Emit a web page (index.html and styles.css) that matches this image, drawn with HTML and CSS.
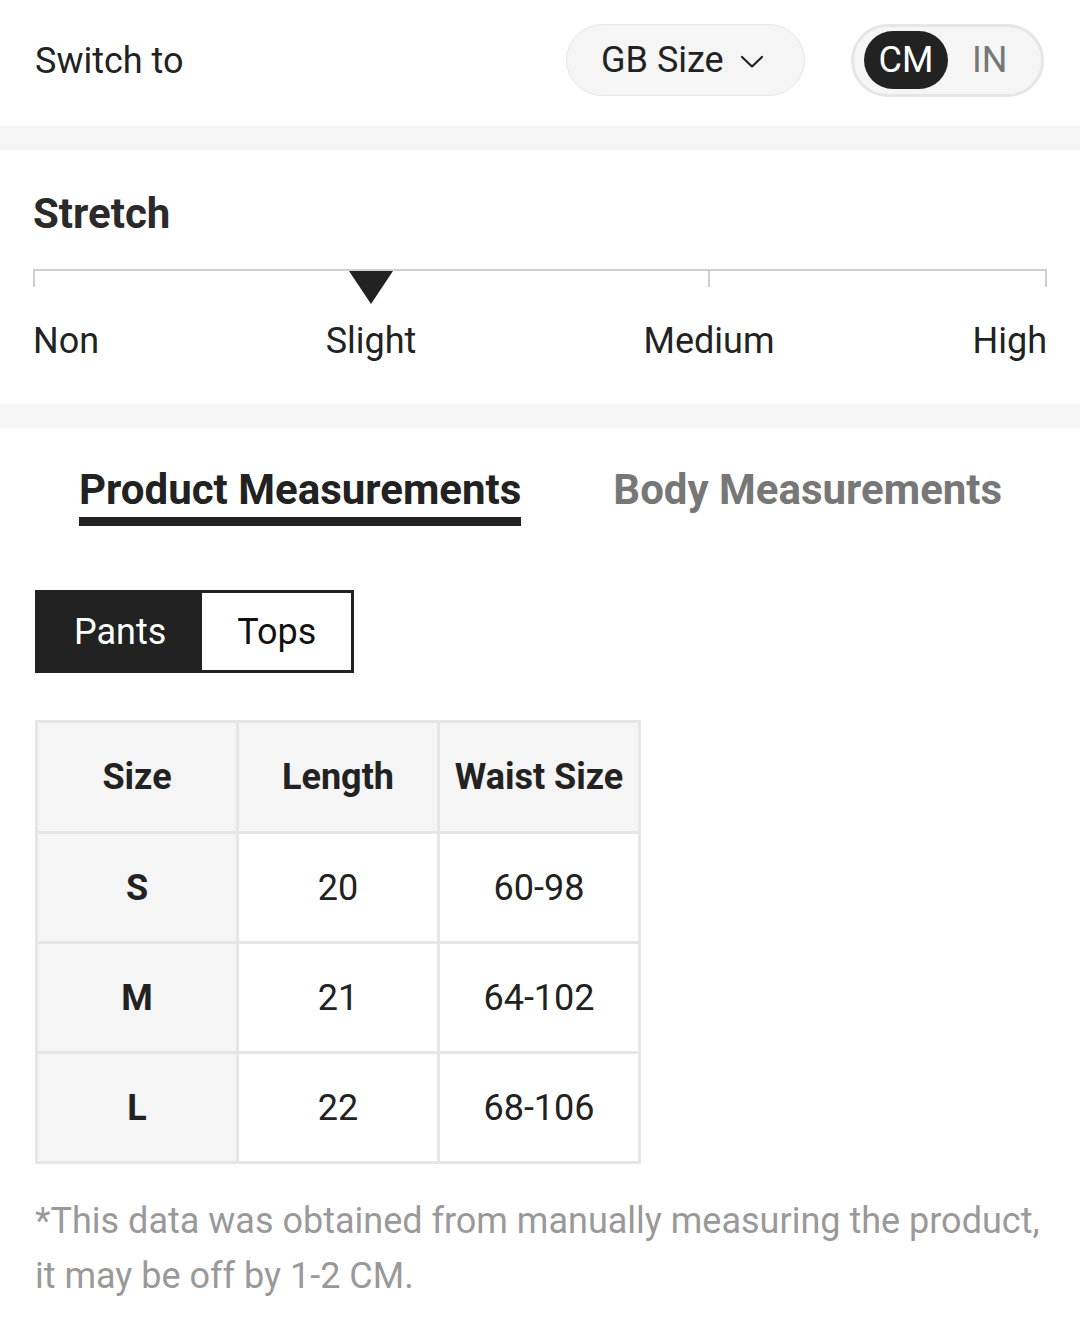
FILE: index.html
```html
<!DOCTYPE html>
<html lang="en">
<head>
<meta charset="utf-8">
<title>Size Guide</title>
<link rel="stylesheet" href="styles.css">
</head>
<body>
<div class="page">
  <header class="topbar">
    <span class="switch-label">Switch to</span>
    <div class="topbar-controls">
      <button class="size-select">
        <span>GB Size</span>
        <svg class="chev" width="24" height="14" viewBox="0 0 24 14"><path d="M2 2 L12 11.5 L22 2" fill="none" stroke="#222" stroke-width="2.2" stroke-linecap="round" stroke-linejoin="round"/></svg>
      </button>
      <div class="unit-toggle">
        <span class="unit active">CM</span>
        <span class="unit">IN</span>
      </div>
    </div>
  </header>

  <div class="band"></div>

  <section class="stretch">
    <h2 class="stretch-title">Stretch</h2>
    <div class="scale">
      <div class="scale-line">
        <span class="tick tick-mid"></span>
        <span class="pointer"></span>
      </div>
      <div class="scale-labels">
        <span class="lbl lbl-non">Non</span>
        <span class="lbl lbl-slight">Slight</span>
        <span class="lbl lbl-medium">Medium</span>
        <span class="lbl lbl-high">High</span>
      </div>
    </div>
  </section>

  <div class="band"></div>

  <section class="measure">
    <nav class="tabs">
      <span class="tab active">Product Measurements</span>
      <span class="tab">Body Measurements</span>
    </nav>

    <div class="segment">
      <span class="seg active">Pants</span>
      <span class="seg">Tops</span>
    </div>

    <table class="size-table">
      <thead>
        <tr><th>Size</th><th>Length</th><th>Waist Size</th></tr>
      </thead>
      <tbody>
        <tr><th>S</th><td>20</td><td>60-98</td></tr>
        <tr><th>M</th><td>21</td><td>64-102</td></tr>
        <tr><th>L</th><td>22</td><td>68-106</td></tr>
      </tbody>
    </table>

    <p class="note">*This data was obtained from manually measuring the product, it may be off by 1-2 CM.</p>
  </section>
</div>
</body>
</html>
```

FILE: styles.css
```css
* { box-sizing: border-box; }
html, body { margin: 0; padding: 0; background: #fff; }
body {
  font-family: Roboto, "Liberation Sans", Arial, sans-serif;
  color: #222;
  width: 1080px;
}

.topbar {
  height: 126px;
  display: flex;
  align-items: center;
  justify-content: space-between;
  padding: 0 36px 6px 35px;
}
.switch-label { font-size: 36px; line-height: 44px; padding-top: 2px; }
.topbar-controls { display: flex; align-items: center; gap: 46px; }
.size-select {
  height: 72px;
  width: 239px;
  border-radius: 36px;
  border: 1.5px solid #e8e8e8;
  background: #f5f5f5;
  font-family: inherit;
  color: #222;
  font-size: 36px;
  display: flex;
  align-items: center;
  padding: 0 0 0 34px;
  gap: 16px;
}
.chev { margin-top: 3px; }
.unit-toggle {
  height: 73px;
  width: 193px;
  border-radius: 37px;
  border: 3px solid #e6e6e6;
  background: #f5f5f5;
  display: flex;
  align-items: center;
  padding: 0 10px;
  gap: 24px;
}
.unit { font-size: 36px; color: #777; line-height: 58px; }
.unit.active {
  background: #222;
  color: #fff;
  width: 84px;
  height: 58px;
  border-radius: 29px;
  text-align: center;
}

.band { height: 24px; background: #f5f5f5; }

.stretch { padding: 39px 33px 41px 33px; }
.stretch-title {
  margin: 0;
  font-size: 42px;
  line-height: 50px;
  font-weight: 700;
  color: #2a2a2a;
}
.scale { margin-top: 30px; }
.scale-line {
  position: relative;
  height: 50px;
  border-top: 2px solid #cfcfcf;
}
.scale-line::before,
.scale-line::after,
.tick-mid {
  content: "";
  position: absolute;
  top: 0;
  width: 2px;
  height: 16px;
  background: #cfcfcf;
}
.scale-line::before { left: 0; }
.scale-line::after { right: 0; }
.tick-mid { left: calc(66.67% - 1px); }
.pointer {
  position: absolute;
  top: 0;
  left: calc(33.33% - 22px);
  width: 0;
  height: 0;
  border-left: 22px solid transparent;
  border-right: 22px solid transparent;
  border-top: 33px solid #222;
}
.scale-labels {
  display: grid;
  grid-template-columns: repeat(6, 1fr);
  font-size: 36px;
  line-height: 44px;
}
.lbl-non { grid-column: 1; justify-self: start; }
.lbl-slight { grid-column: 2 / span 2; justify-self: center; }
.lbl-medium { grid-column: 4 / span 2; justify-self: center; }
.lbl-high { grid-column: 6; justify-self: end; }

.measure { padding: 37px 35px 40px 35px; }
.tabs { display: flex; gap: 92px; padding-left: 44px; }
.tab {
  font-size: 42px;
  line-height: 50px;
  font-weight: 700;
  color: #777;
  padding-bottom: 2px;
  border-bottom: 9px solid transparent;
}
.tab.active { color: #222; border-bottom-color: #222; }

.segment {
  margin-top: 64px;
  display: inline-flex;
  height: 83px;
  border: 3px solid #222;
}
.seg {
  display: flex;
  align-items: center;
  font-size: 36px;
  color: #111;
  padding: 0 35px;
  background: #fff;
}
.seg.active { background: #222; color: #fff; padding: 0 36px; }

.size-table {
  display: table;
  margin-top: 47px;
  border-collapse: separate;
  border-spacing: 0;
  border-top: 3px solid #e6e6e6;
  border-left: 3px solid #e6e6e6;
}
.size-table th, .size-table td {
  width: 201px;
  height: 110px;
  border-right: 3px solid #e6e6e6;
  border-bottom: 3px solid #e6e6e6;
  text-align: center;
  font-size: 36px;
  padding: 0;
}
.size-table th { font-weight: 700; background: #f5f5f5; color: #222; }
.size-table td { font-weight: 400; color: #222; background: #fff; }
.size-table thead th { height: 111px; }

.note {
  margin: 30px 0 0 0;
  font-size: 36px;
  line-height: 55px;
  color: #999;
}
```
